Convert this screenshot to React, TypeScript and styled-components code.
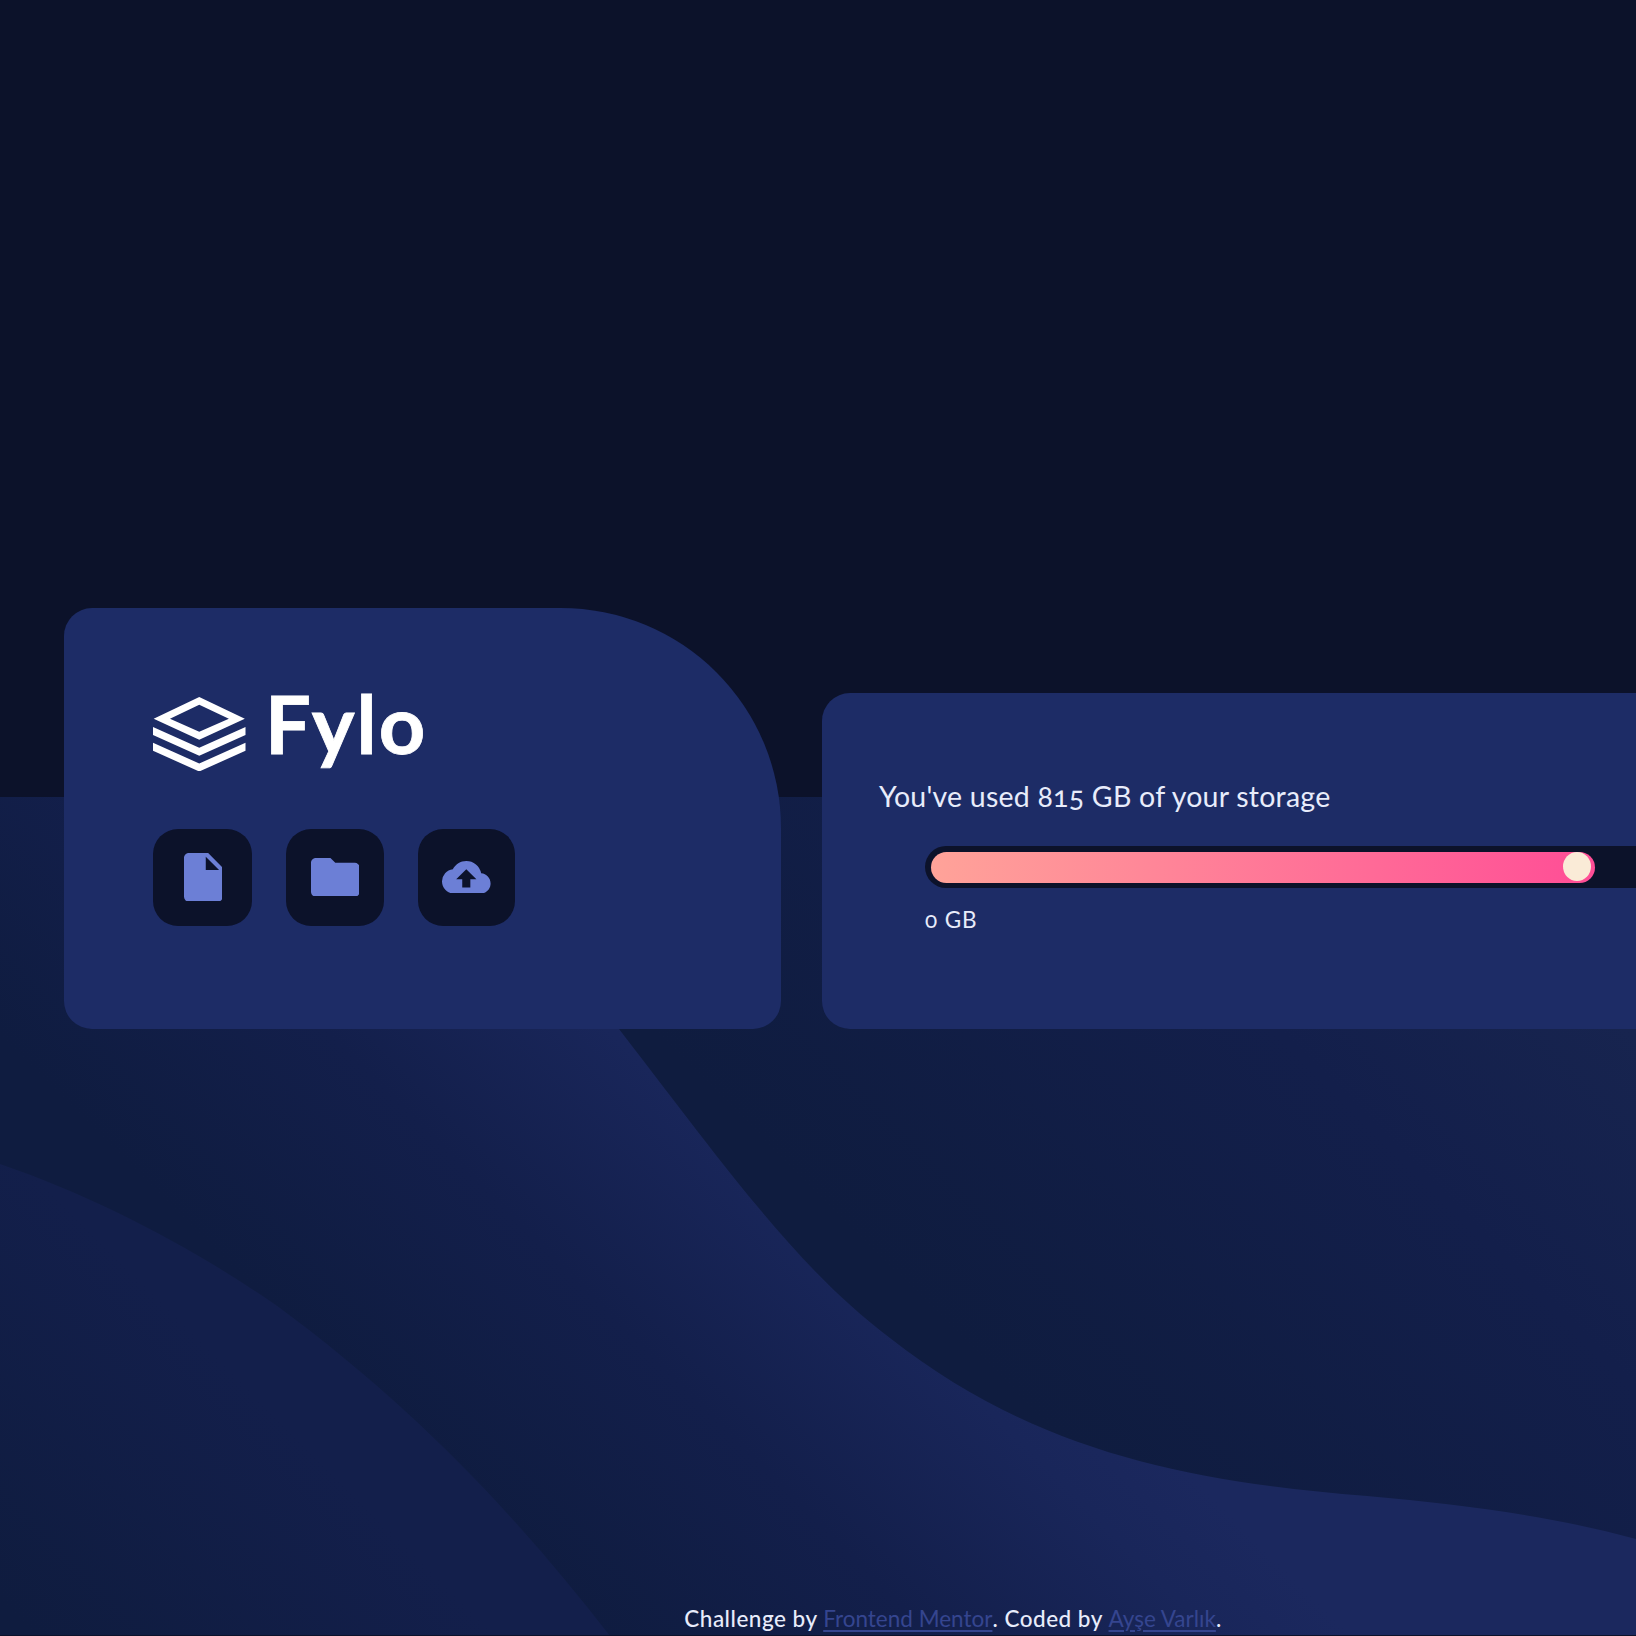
import React from "react";
import styled, { createGlobalStyle } from "styled-components";

const GlobalStyle = createGlobalStyle`
  *, *::before, *::after { box-sizing: border-box; }
  html, body { margin: 0; overflow: hidden; background: #0c122c; }
`;

const Viewport = styled.div`
  width: 100%;
  height: 1636px;
  overflow: hidden;
`;

const Page = styled.div`
  display: grid;
  width: 1906px;
  height: 1636px;
  background: #0c122a;
  color: #e8ecfb;
  font-family: Lato, "Open Sans", sans-serif;
`;

const Waves = styled.svg`
  grid-area: 1 / 1;
  align-self: end;
  display: block;
  width: 1906px;
  height: 838px;
  margin-bottom: 1px;
`;

const Content = styled.div`
  grid-area: 1 / 1;
  z-index: 1;
  display: flex;
  flex-direction: column;
  padding-top: 608px;
`;

const Main = styled.main`
  display: flex;
  align-items: flex-end;
  gap: 41px;
  padding: 0 64px;
  height: 421px;
`;

const Card = styled.section`
  background: #1d2c66;
  border-radius: 28px;
`;

const BrandCard = styled(Card)`
  width: 717px;
  height: 421px;
  padding: 86px 89px 0;
  border-top-right-radius: 220px;
`;

const StorageCard = styled(Card)`
  flex: 1;
  height: 336px;
  padding: 83px 57px 0;
`;

const Logo = styled.div`
  display: flex;
  align-items: flex-start;
  height: 134.6px;
`;

const LogoMark = styled.svg`
  width: 92.5px;
  height: 74.5px;
  margin-top: 2.5px;
`;

const Wordmark = styled.span`
  margin: -20px 0 0 19.5px;
  font-size: 81px;
  font-weight: 700;
  line-height: 97px;
  color: #fff;
  letter-spacing: 2px;
  -webkit-text-stroke: 0.8px #fff;
`;

const Actions = styled.div`
  display: flex;
  gap: 33.8px;
  padding-left: 0.4px;
`;

const Tile = styled.button<{ $width?: number }>`
  display: flex;
  align-items: center;
  justify-content: center;
  width: ${(p) => p.$width ?? 97.6}px;
  height: 97.6px;
  padding: 0 0 1px;
  border: 0;
  border-radius: 25px;
  background: #0c122a;
`;

const Glyph = styled.svg<{ $w: number; $h: number }>`
  width: ${(p) => p.$w}px;
  height: ${(p) => p.$h}px;
  fill: #6c7fd6;
`;

const Usage = styled.p`
  margin: 0;
  font-size: 28.5px;
  line-height: 40px;
  letter-spacing: 0.23px;
  font-variant-numeric: oldstyle-nums;
  white-space: nowrap;
`;

const Meter = styled.div`
  width: 814px;
  margin: 30.4px 0 0 46px;
`;

const Track = styled.div`
  height: 41.6px;
  padding: 6px;
  border-radius: 21px;
  background: #0c122a;
`;

const Fill = styled.div`
  display: flex;
  justify-content: flex-end;
  width: 664px;
  height: 30.6px;
  padding-right: 4px;
  border-radius: 16px;
  background: linear-gradient(to right, #ffa399, #ff4d96);
`;

const Knob = styled.span`
  width: 28px;
  height: 29px;
  border-radius: 50%;
  background: #faebd7;
`;

const Scale = styled.div`
  margin-top: 17.4px;
  font-size: 22.5px;
  line-height: 30px;
  letter-spacing: 0.9px;
  font-variant-numeric: oldstyle-nums;
`;

const Footer = styled.footer`
  margin-top: 577px;
  font-size: 22.5px;
  font-weight: 500;
  line-height: 26px;
  letter-spacing: 0.5px;
  text-align: center;
  white-space: nowrap;
`;

const FooterLink = styled.a`
  color: #35458f;
  font-weight: 400;
  letter-spacing: 0;
  text-decoration: underline;
  text-decoration-thickness: 2px;
  text-underline-offset: 3px;
`;

function Background() {
  return (
    <Waves viewBox="0 797 1906 838" preserveAspectRatio="none" aria-hidden="true">
      <defs>
        <linearGradient id="band" gradientUnits="userSpaceOnUse" x1="0" y1="1035" x2="375" y2="660">
          <stop offset="0" stopColor="#0f1c40" />
          <stop offset="0.44" stopColor="#131f4b" />
          <stop offset="0.82" stopColor="#19265a" />
          <stop offset="1" stopColor="#1b285e" />
        </linearGradient>
        <linearGradient id="hill" gradientUnits="userSpaceOnUse" x1="0" y1="1600" x2="230" y2="1370">
          <stop offset="0" stopColor="#0f1c3f" />
          <stop offset="1" stopColor="#131f4b" />
        </linearGradient>
        <linearGradient id="sky" gradientUnits="userSpaceOnUse" x1="600" y1="980" x2="1090" y2="490">
          <stop offset="0" stopColor="#0f1c3f" />
          <stop offset="0.64" stopColor="#131f4b" />
          <stop offset="1" stopColor="#17244f" />
        </linearGradient>
      </defs>
      <rect x="0" y="797" width="1906" height="838" fill="url(#band)" />
      <path
        fill="url(#sky)"
        d="M430 797 C500 880 560 955 619 1029 C735 1180 800 1270 890 1338 C1035 1452 1190 1482 1367 1496 C1470 1505 1555 1517 1636 1539 L1906 1635 L1906 797 Z"
      />
      <path fill="url(#hill)" d="M0 1164 C100 1198 200 1252 280 1308 C420 1412 520 1520 610 1636 L0 1636 Z" />
    </Waves>
  );
}

export default function App() {
  return (
    <Viewport>
      <GlobalStyle />
      <Page>
        <Background />
        <Content>
          <Main>
            <BrandCard>
              <Logo>
                <LogoMark viewBox="69 50 278 223" preserveAspectRatio="none" fill="#fff">
                  <path
                    fillRule="evenodd"
                    d="M208 50L345 115L208 178L71 115ZM208 73L120 115L208 154L297 115Z"
                  />
                  <path d="M69 140L208 202L347 140V164L208 226L69 164Z" />
                  <path d="M69 187L208 249L347 187V211L208 273L69 211Z" />
                </LogoMark>
                <Wordmark>Fylo</Wordmark>
              </Logo>
              <Actions>
                <Tile $width={99} aria-label="Files">
                  <Glyph $w={38.7} $h={48.6} viewBox="4 2 16 20" preserveAspectRatio="none">
                    <path d="M13 9h5.5L13 3.5V9M6 2h8l6 6v12a2 2 0 0 1-2 2H6a2 2 0 0 1-2-2V4c0-1.11.89-2 2-2z" />
                  </Glyph>
                </Tile>
                <Tile aria-label="Folders">
                  <Glyph $w={48.6} $h={38.7} viewBox="2 4 20 16" preserveAspectRatio="none">
                    <path d="M10 4H4c-1.11 0-2 .89-2 2v12c0 1.1.9 2 2 2h16a2 2 0 0 0 2-2V8a2 2 0 0 0-2-2h-8l-2-2z" />
                  </Glyph>
                </Tile>
                <Tile aria-label="Upload">
                  <Glyph $w={48.6} $h={32.6} viewBox="0 4 24 16" preserveAspectRatio="none">
                    <path d="M19.35 10.04A7.49 7.49 0 0 0 12 4C9.11 4 6.6 5.64 5.35 8.04A5.994 5.994 0 0 0 0 14c0 3.31 2.69 6 6 6h13c2.76 0 5-2.24 5-5 0-2.64-2.05-4.78-4.65-4.96zM14 13v4h-4v-4H7l5-5 5 5h-3z" />
                  </Glyph>
                </Tile>
              </Actions>
            </BrandCard>
            <StorageCard>
              <Usage>You've used 815 GB of your storage</Usage>
              <Meter>
                <Track>
                  <Fill>
                    <Knob />
                  </Fill>
                </Track>
                <Scale>0 GB</Scale>
              </Meter>
            </StorageCard>
          </Main>
          <Footer>
            Challenge by <FooterLink>Frontend Mentor</FooterLink>. Coded by <FooterLink>Ayşe Varlık</FooterLink>.
          </Footer>
        </Content>
      </Page>
    </Viewport>
  );
}
